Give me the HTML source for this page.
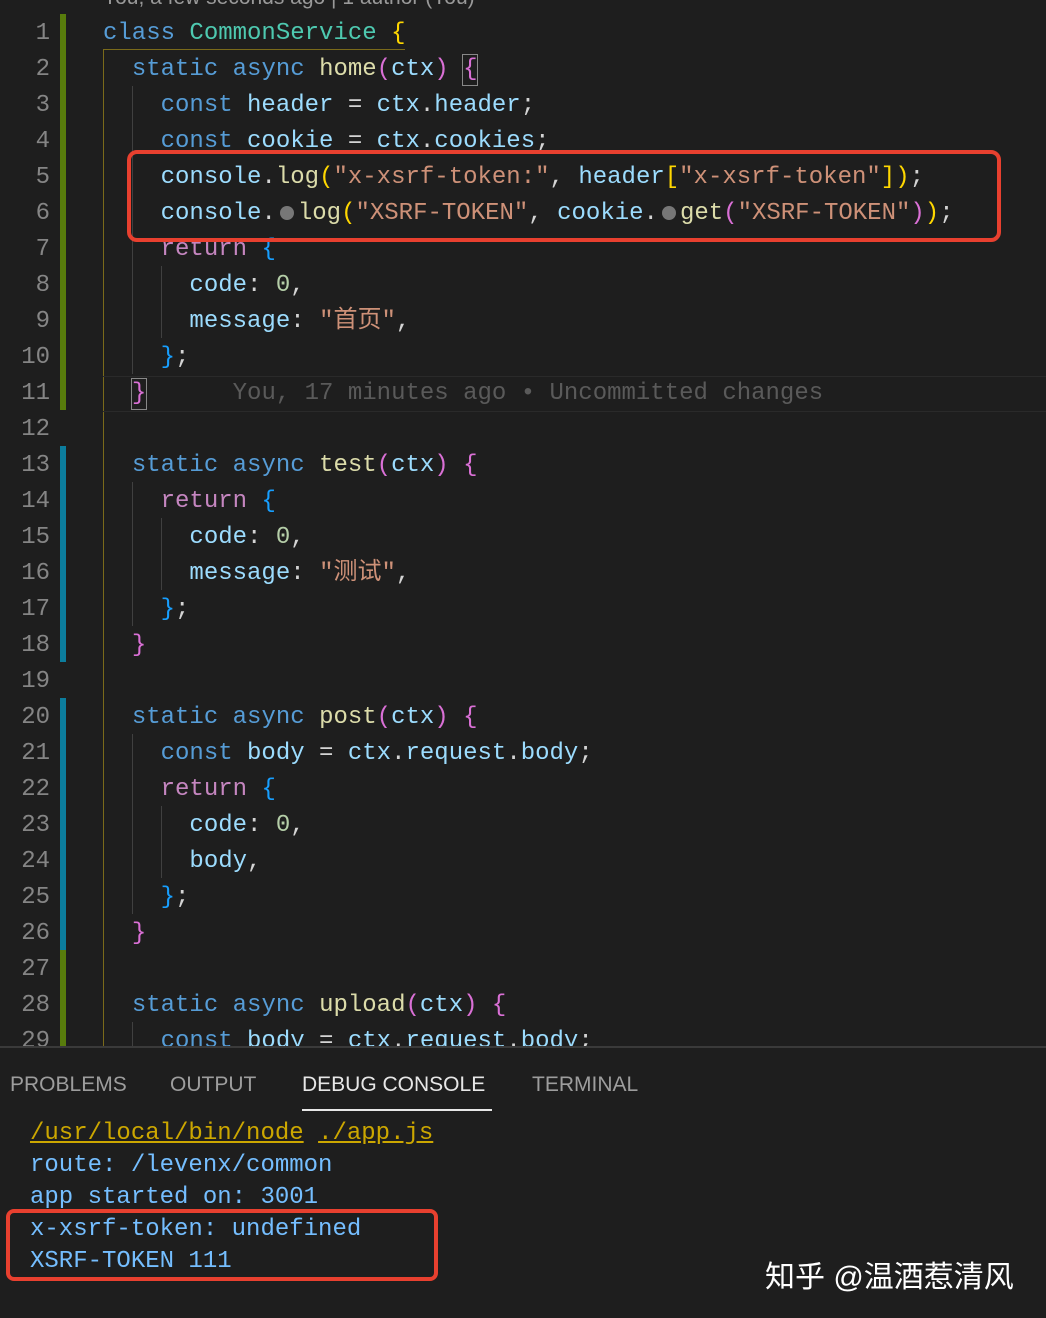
<!DOCTYPE html>
<html><head><meta charset="utf-8"><style>
body{margin:0;width:1046px;height:1316px;background:#1e1e1e;overflow:hidden;position:relative;font-family:"Liberation Mono","Noto Sans CJK SC",monospace;}
.l{position:absolute;left:103px;height:36px;line-height:36px;font-size:24px;white-space:pre;color:#d4d4d4;margin-top:2px}
.n{position:absolute;left:0;width:50px;text-align:right;height:36px;line-height:36px;font-size:24px;color:#858585;font-family:"Liberation Mono",monospace;margin-top:2px}
.k{color:#569cd6}.c{color:#4ec9b0}.f{color:#dcdcaa}.v{color:#9cdcfe}.s{color:#ce9178}.nu{color:#b5cea8}.r{color:#c586c0}
.g{color:#ffd700}.m{color:#da70d6}.b{color:#179fff}
.bar{position:absolute;left:60px;width:6px}
.guide{position:absolute;width:1px;background:#404040}
.dot{display:inline-block;width:14px;height:14px;border-radius:7px;background:#777;vertical-align:-1px;margin:0 4px}
.tab{position:absolute;top:1073px;font-family:"Liberation Sans",sans-serif;font-size:21px;color:#9d9d9d}
.cl{position:absolute;left:30px;font-size:24px;line-height:32px;white-space:pre;color:#75beff;margin-top:2px}
</style></head><body>
<div style="position:absolute;left:103px;top:-14px;font-family:'Liberation Sans',sans-serif;font-size:21px;color:#999">You, a few seconds ago | 1 author (You)</div>

<div class="bar" style="top:14px;height:396px;background:#587c0c"></div>
<div class="bar" style="top:446px;height:216px;background:#0c7d9d"></div>
<div class="bar" style="top:698px;height:252px;background:#0c7d9d"></div>
<div class="bar" style="top:950px;height:96px;background:#587c0c"></div>

<div class="guide" style="left:103px;top:50px;height:996px;background:#7a6a1a"></div>
<div style="position:absolute;left:103px;top:49px;width:302px;height:1px;background:#7a6a1a"></div>
<div class="guide" style="left:132px;top:86px;height:288px"></div>
<div class="guide" style="left:161px;top:266px;height:72px"></div>
<div class="guide" style="left:132px;top:482px;height:144px"></div>
<div class="guide" style="left:161px;top:518px;height:72px"></div>
<div class="guide" style="left:132px;top:734px;height:180px"></div>
<div class="guide" style="left:161px;top:806px;height:72px"></div>
<div class="guide" style="left:132px;top:1022px;height:24px"></div>
<div style="position:absolute;left:462px;top:54px;width:14px;height:30px;border:1px solid #888"></div>
<div style="position:absolute;left:131px;top:378px;width:14px;height:30px;border:1px solid #888"></div>
<div style="position:absolute;left:103px;top:376px;width:943px;height:34px;border-top:1px solid #2a2a2a;border-bottom:1px solid #2a2a2a"></div>

<div class="n" style="top:14px">1</div><div class="l" style="top:14px"><span class="k">class</span> <span class="c">CommonService</span> <span class="g">{</span></div>
<div class="n" style="top:50px">2</div><div class="l" style="top:50px">  <span class="k">static</span> <span class="k">async</span> <span class="f">home</span><span class="m">(</span><span class="v">ctx</span><span class="m">)</span> <span class="m">{</span></div>
<div class="n" style="top:86px">3</div><div class="l" style="top:86px">    <span class="k">const</span> <span class="v">header</span> = <span class="v">ctx</span>.<span class="v">header</span>;</div>
<div class="n" style="top:122px">4</div><div class="l" style="top:122px">    <span class="k">const</span> <span class="v">cookie</span> = <span class="v">ctx</span>.<span class="v">cookies</span>;</div>
<div class="n" style="top:158px">5</div><div class="l" style="top:158px">    <span class="v">console</span>.<span class="f">log</span><span class="g">(</span><span class="s">"x-xsrf-token:"</span>, <span class="v">header</span><span class="g">[</span><span class="s">"x-xsrf-token"</span><span class="g">]</span><span class="g">)</span>;</div>
<div class="n" style="top:194px">6</div><div class="l" style="top:194px">    <span class="v">console</span>.<span class="dot"></span><span class="f">log</span><span class="g">(</span><span class="s">"XSRF-TOKEN"</span>, <span class="v">cookie</span>.<span class="dot"></span><span class="f">get</span><span class="m">(</span><span class="s">"XSRF-TOKEN"</span><span class="m">)</span><span class="g">)</span>;</div>
<div class="n" style="top:230px">7</div><div class="l" style="top:230px">    <span class="r">return</span> <span class="b">{</span></div>
<div class="n" style="top:266px">8</div><div class="l" style="top:266px">      <span class="v">code</span>: <span class="nu">0</span>,</div>
<div class="n" style="top:302px">9</div><div class="l" style="top:302px">      <span class="v">message</span>: <span class="s">"首页"</span>,</div>
<div class="n" style="top:338px">10</div><div class="l" style="top:338px">    <span class="b">}</span>;</div>
<div class="n" style="top:374px">11</div><div class="l" style="top:374px">  <span class="m">}</span>      <span style="color:#5a5a5a">You, 17 minutes ago • Uncommitted changes</span></div>
<div class="n" style="top:410px">12</div>
<div class="n" style="top:446px">13</div><div class="l" style="top:446px">  <span class="k">static</span> <span class="k">async</span> <span class="f">test</span><span class="m">(</span><span class="v">ctx</span><span class="m">)</span> <span class="m">{</span></div>
<div class="n" style="top:482px">14</div><div class="l" style="top:482px">    <span class="r">return</span> <span class="b">{</span></div>
<div class="n" style="top:518px">15</div><div class="l" style="top:518px">      <span class="v">code</span>: <span class="nu">0</span>,</div>
<div class="n" style="top:554px">16</div><div class="l" style="top:554px">      <span class="v">message</span>: <span class="s">"测试"</span>,</div>
<div class="n" style="top:590px">17</div><div class="l" style="top:590px">    <span class="b">}</span>;</div>
<div class="n" style="top:626px">18</div><div class="l" style="top:626px">  <span class="m">}</span></div>
<div class="n" style="top:662px">19</div>
<div class="n" style="top:698px">20</div><div class="l" style="top:698px">  <span class="k">static</span> <span class="k">async</span> <span class="f">post</span><span class="m">(</span><span class="v">ctx</span><span class="m">)</span> <span class="m">{</span></div>
<div class="n" style="top:734px">21</div><div class="l" style="top:734px">    <span class="k">const</span> <span class="v">body</span> = <span class="v">ctx</span>.<span class="v">request</span>.<span class="v">body</span>;</div>
<div class="n" style="top:770px">22</div><div class="l" style="top:770px">    <span class="r">return</span> <span class="b">{</span></div>
<div class="n" style="top:806px">23</div><div class="l" style="top:806px">      <span class="v">code</span>: <span class="nu">0</span>,</div>
<div class="n" style="top:842px">24</div><div class="l" style="top:842px">      <span class="v">body</span>,</div>
<div class="n" style="top:878px">25</div><div class="l" style="top:878px">    <span class="b">}</span>;</div>
<div class="n" style="top:914px">26</div><div class="l" style="top:914px">  <span class="m">}</span></div>
<div class="n" style="top:950px">27</div>
<div class="n" style="top:986px">28</div><div class="l" style="top:986px">  <span class="k">static</span> <span class="k">async</span> <span class="f">upload</span><span class="m">(</span><span class="v">ctx</span><span class="m">)</span> <span class="m">{</span></div>
<div class="n" style="top:1022px">29</div><div class="l" style="top:1022px">    <span class="k">const</span> <span class="v">body</span> = <span class="v">ctx</span>.<span class="v">request</span>.<span class="v">body</span>;</div>

<div style="position:absolute;left:127px;top:150px;width:866px;height:84px;border:4px solid #e8402f;border-radius:10px"></div>

<div style="position:absolute;left:0;top:1046px;width:1046px;height:270px;background:#1e1e1e;border-top:2px solid #3a3a3a"></div>
<div class="tab" style="left:10px">PROBLEMS</div>
<div class="tab" style="left:170px">OUTPUT</div>
<div class="tab" style="left:302px;color:#e7e7e7">DEBUG CONSOLE</div>
<div class="tab" style="left:532px">TERMINAL</div>
<div style="position:absolute;left:302px;top:1109px;width:190px;height:2px;background:#e7e7e7"></div>

<div class="cl" style="top:1116px;color:#cca700"><u>/usr/local/bin/node</u> <u>./app.js</u></div>
<div class="cl" style="top:1148px">route: /levenx/common</div>
<div class="cl" style="top:1180px">app started on: 3001</div>
<div class="cl" style="top:1212px">x-xsrf-token: undefined</div>
<div class="cl" style="top:1244px">XSRF-TOKEN 111</div>
<div style="position:absolute;left:6px;top:1209px;width:424px;height:64px;border:4px solid #e8402f;border-radius:8px"></div>

<div style="position:absolute;left:765px;top:1252px;font-family:'Liberation Sans','Noto Sans CJK SC',sans-serif;font-size:30px;color:#fff;white-space:nowrap">知乎 @温酒惹清风</div>
</body></html>
